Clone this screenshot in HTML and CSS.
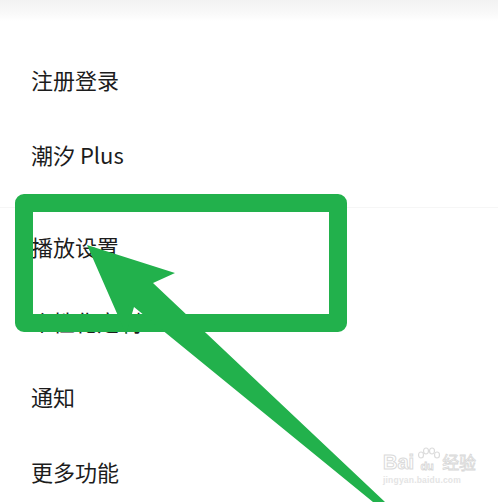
FILE: index.html
```html
<!DOCTYPE html>
<html lang="zh-CN">
<head>
<meta charset="utf-8">
<link rel="stylesheet" href="styles.css">
</head>
<body>
<div class="page">
  <div class="topbar"></div>
  <div class="group first">
    <div class="row">注册登录</div>
    <div class="row">潮汐 Plus</div>
  </div>
  <div class="group second">
    <div class="row">播放设置</div>
    <div class="row">个性化定制</div>
    <div class="row">通知</div>
    <div class="row">更多功能</div>
  </div>

  <div class="watermark">
    <div class="wm-top">
      <span class="wm-bai">Bai</span>
      <span class="wm-du">
        <svg class="paw" width="30" height="16" viewBox="0 0 30 16">
          <g fill="none" stroke="#dcdcdc" stroke-width="1.2">
            <ellipse cx="9" cy="8" rx="2.5" ry="3"/>
            <ellipse cx="14" cy="4" rx="2.5" ry="3"/>
            <ellipse cx="20" cy="4" rx="2.5" ry="3"/>
            <ellipse cx="25" cy="8" rx="2.5" ry="3"/>
          </g>
        </svg>
        <span class="du-text">du</span>
      </span>
      <span class="wm-jy">经验</span>
    </div>
    <div class="wm-url">jingyan.baidu.com</div>
  </div>

  <svg class="annot" width="498" height="502" viewBox="0 0 498 502">
    <rect x="24" y="203" width="314" height="120" fill="none" stroke="#22b14c" stroke-width="18" stroke-linejoin="round"/>
    <polygon fill="#22b14c" points="87,245 175,273 153,283 385,502 373,502 134,307 126,334"/>
  </svg>
</div>
</body>
</html>
```

FILE: styles.css
```css
html, body {
  margin: 0;
  padding: 0;
  background: #ffffff;
}

.page {
  position: relative;
  width: 498px;
  height: 502px;
  overflow: hidden;
  font-family: "Noto Sans CJK SC", "Noto Sans", sans-serif;
  color: #1c1c1c;
}

.topbar {
  height: 21px;
  background: linear-gradient(#f2f2f2, #fafafa 70%, #ffffff);
}

.group {
  display: flex;
  flex-direction: column;
}

.group.first {
  padding-top: 20px;
}

.group.second {
  margin-top: 16px;
  border-top: 1px solid #f6f6f6;
}

.row {
  height: 75px;
  display: flex;
  align-items: center;
  padding-left: 31px;
  font-size: 22px;
  line-height: 1;
}

.watermark {
  position: absolute;
  left: 383px;
  top: 444px;
  color: #e2e2e2;
  font-family: "Liberation Sans", sans-serif;
}

.wm-top {
  display: flex;
  align-items: flex-end;
  height: 28px;
}

.wm-bai {
  font-size: 20px;
  font-weight: bold;
  line-height: 20px;
  color: transparent;
  -webkit-text-stroke: 1px #dadada;
}

.wm-du {
  display: flex;
  flex-direction: column;
  align-items: center;
  width: 26px;
}

.paw {
  margin-bottom: -3px;
}

.du-text {
  font-size: 11px;
  font-weight: bold;
  line-height: 12px;
  color: transparent;
  -webkit-text-stroke: 0.8px #d6d6d6;
}

.wm-jy {
  font-family: "Noto Sans CJK SC", sans-serif;
  font-size: 17px;
  line-height: 20px;
  color: transparent;
  -webkit-text-stroke: 0.8px #d8d8d8;
  margin-left: 2px;
}

.wm-url {
  font-size: 8.5px;
  font-weight: bold;
  color: #e4e4e4;
  margin-top: 3px;
  letter-spacing: 0.2px;
}

.annot {
  position: absolute;
  left: 0;
  top: 0;
}
```
